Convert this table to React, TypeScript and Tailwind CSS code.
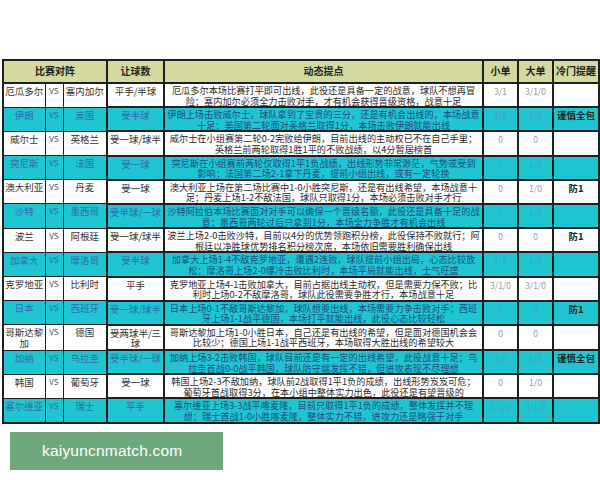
const rows = [
  {
    a: "厄瓜多尔",
    b: "塞内加尔",
    h: "平手/半球",
    t: "厄瓜多尔本场比赛打平即可出线，此役还是具备一定的战意，球队不想再冒险；塞内加尔必须全力击败对手，才有机会获得晋级资格，战意十足",
    s: "3/1",
    l: "3/1/0",
    c: "",
  },
  {
    a: "伊朗",
    b: "美国",
    h: "受半球",
    t: "伊朗上场击败威尔士，球队拿到了宝贵的三分，还是有机会出线的，本场战意十足；美国第二轮面对英格兰取得1分，本场击败伊朗就能出线",
    s: "1/0",
    l: "1/0",
    c: "谨慎全包",
  },
  {
    a: "威尔士",
    b: "英格兰",
    h: "受一球/球半",
    t: "威尔士在小组赛第二轮0-2完败给伊朗，目前出线的主动权已不在自己手里；英格兰前两轮取得1胜1平的不败战绩，以4分暂居榜首",
    s: "0",
    l: "0",
    c: "",
  },
  {
    a: "突尼斯",
    b: "法国",
    h: "受一球",
    t: "突尼斯在小组赛前两轮仅取得1平1负战绩，出线形势非常渺茫，气势或受到影响；法国第二场2-1拿下丹麦，提前小组出线，或有一定轮换",
    s: "0",
    l: "1/0",
    c: "",
  },
  {
    a: "澳大利亚",
    b: "丹麦",
    h: "受一球",
    t: "澳大利亚上场在第二场比赛中1-0小胜突尼斯，还是有出线希望，本场战意十足；丹麦上场1-2不敌法国，球队只取得1分，本场必须击败对手才行",
    s: "0",
    l: "1/0",
    c: "防1",
  },
  {
    a: "沙特",
    b: "墨西哥",
    h: "受半球/一球",
    t: "沙特阿拉伯本场比赛面对对手可以确保一个晋级名额，此役还是具备十足的战意；墨西哥两轮过后只拿到1分，本场全力争胜才有机会出线",
    s: "0",
    l: "1/0",
    c: "",
  },
  {
    a: "波兰",
    b: "阿根廷",
    h: "受一球/球半",
    t: "波兰上场2-0击败沙特，目前以4分的优势领跑积分榜，此役保持不败就行；阿根廷以净胜球优势排名积分榜次席，本场依旧需要胜利确保出线",
    s: "0",
    l: "0",
    c: "防1",
  },
  {
    a: "加拿大",
    b: "摩洛哥",
    h: "受半球",
    t: "加拿大上场1-4不敌克罗地亚，遭遇2连败，球队提前小组出局，心态比较放松；摩洛哥上场2-0爆冷击败比利时，本场平局就能出线，士气旺盛",
    s: "1/0",
    l: "1/0",
    c: "",
  },
  {
    a: "克罗地亚",
    b: "比利时",
    h: "平手",
    t: "克罗地亚上场4-1击败加拿大，目前占据出线主动权，但是需要力保不败；比利时上场0-2不敌摩洛哥，球队此役需要争胜才行，本场战意十足",
    s: "3/1/0",
    l: "3/1/0",
    c: "",
  },
  {
    a: "日本",
    b: "西班牙",
    h: "受一球/球半",
    t: "日本上场0-1不敌哥斯达黎加，球队想要出线，本场需要力争击败对手；西班牙上场1-1战平德国，本场打平就能出线，此役心态比较轻松",
    s: "0",
    l: "0",
    c: "防1",
  },
  {
    a: "哥斯达黎\n加",
    b: "德国",
    h: "受两球半/三\n球",
    t: "哥斯达黎加上场1-0小胜日本，自己还是有出线的希望，但是面对德国机会会比较少；德国上场1-1战平西班牙，本场取得大胜出线的希望较大",
    s: "0",
    l: "0",
    c: "",
  },
  {
    a: "加纳",
    b: "乌拉圭",
    h: "受半球/一球",
    t: "加纳上场3-2击败韩国，球队目前还是有一定的出线希望，此役战意十足；乌拉圭首战0-0战平韩国，球队防守端发挥不错，但进攻表现不尽理想",
    s: "1/0",
    l: "1/0",
    c: "谨慎全包",
  },
  {
    a: "韩国",
    b: "葡萄牙",
    h: "受一球",
    t: "韩国上场2-3不敌加纳，球队前2战取得1平1负的成绩，出线形势岌岌可危；葡萄牙首战取得3分，在本小组中整体实力出色，此役还是有望晋级的",
    s: "0",
    l: "1/0",
    c: "",
  },
  {
    a: "塞尔维亚",
    b: "瑞士",
    h: "平手",
    t: "塞尔维亚上场3-3战平喀麦隆，目前只取得1平1负的成绩，整体发挥并不理想；瑞士首战1-0小胜喀麦隆，整体实力不错，进攻力还是略强于对手",
    s: "3/1/0",
    l: "3/1/0",
    c: "",
  },
];

const App = () => {
  return (
    <div
      className="w-[600px] h-[480px] bg-white overflow-hidden"
      style={{ fontFamily: '"Noto Sans CJK SC", "Noto Sans", sans-serif' }}
    >
      <div className="pt-[59px] pl-[2px]">
        <table className="table-fixed border-collapse border-2 border-[#1f1f1f] w-[596px] text-[9.5px] leading-[10.6px]">
          <colgroup>
            <col className="w-[42px]" />
            <col className="w-[18px]" />
            <col className="w-[44px]" />
            <col className="w-[57px]" />
            <col className="w-[319px]" />
            <col className="w-[35px]" />
            <col className="w-[35px]" />
            <col className="w-[46px]" />
          </colgroup>
          <thead>
            <tr className="h-[23px] bg-[#d4d99e] text-[#222] font-bold text-[10px]">
              <th colSpan={3} className="border-2 border-[#1f1f1f]">
                比赛对阵
              </th>
              <th className="border-2 border-[#1f1f1f]">让球数</th>
              <th className="border-2 border-[#1f1f1f]">动态提点</th>
              <th className="border-2 border-[#1f1f1f]">小单</th>
              <th className="border-2 border-[#1f1f1f]">大单</th>
              <th className="border-2 border-[#1f1f1f] whitespace-nowrap">
                冷门提醒
              </th>
            </tr>
          </thead>
          <tbody>
            {rows.map((r, i) => {
              const cyan = i % 2 === 1;
              const bg = cyan ? "bg-[#1fc6d2]" : "bg-white";
              const team = cyan ? "text-[#2f6cae]" : "text-[#333]";
              const num = cyan ? "text-[#4d9cc6]" : "text-[#999]";
              return (
                <tr key={i} className={`h-[24px] ${bg} align-top`}>
                  <td className={`border border-[#1f1f1f] text-center pt-[2px] whitespace-pre-line overflow-hidden ${team}`}>
                    {r.a}
                  </td>
                  <td className={`border border-[#1f1f1f] text-center pt-[2px] text-[8px] ${cyan ? "text-[#2f6cae]" : "text-[#555]"}`}>
                    VS
                  </td>
                  <td className={`border border-[#1f1f1f] border-r-2 text-center pt-[2px] ${team}`}>
                    {r.b}
                  </td>
                  <td className={`border-2 border-[#1f1f1f] text-center pt-[2px] whitespace-pre-line ${team}`}>
                    {r.h}
                  </td>
                  <td className={`border-2 border-[#1f1f1f] text-center px-[2px] pt-[1px] text-[9.2px] ${cyan ? "text-[#1d4e7e]" : "text-[#2a2a2a]"}`}>
                    {r.t}
                  </td>
                  <td className={`border-2 border-[#1f1f1f] text-center pt-[2px] text-[8.5px] ${num}`}>
                    {r.s}
                  </td>
                  <td className={`border-2 border-[#1f1f1f] text-center pt-[2px] text-[8.5px] ${num}`}>
                    {r.l}
                  </td>
                  <td className="border-2 border-[#1f1f1f] text-center pt-[2px] font-bold text-[#222] whitespace-nowrap">
                    {r.c}
                  </td>
                </tr>
              );
            })}
          </tbody>
        </table>
      </div>
      <div className="mt-[8px] ml-[10px] w-[213px] h-[38px] bg-[#6ea77b] flex items-center pl-[32px]">
        <span
          className="text-white text-[15.5px] tracking-[0.2px]"
          style={{ fontFamily: '"Liberation Sans", Arial, sans-serif' }}
        >
          kaiyuncnmatch.com
        </span>
      </div>
    </div>
  );
};

export default App;
